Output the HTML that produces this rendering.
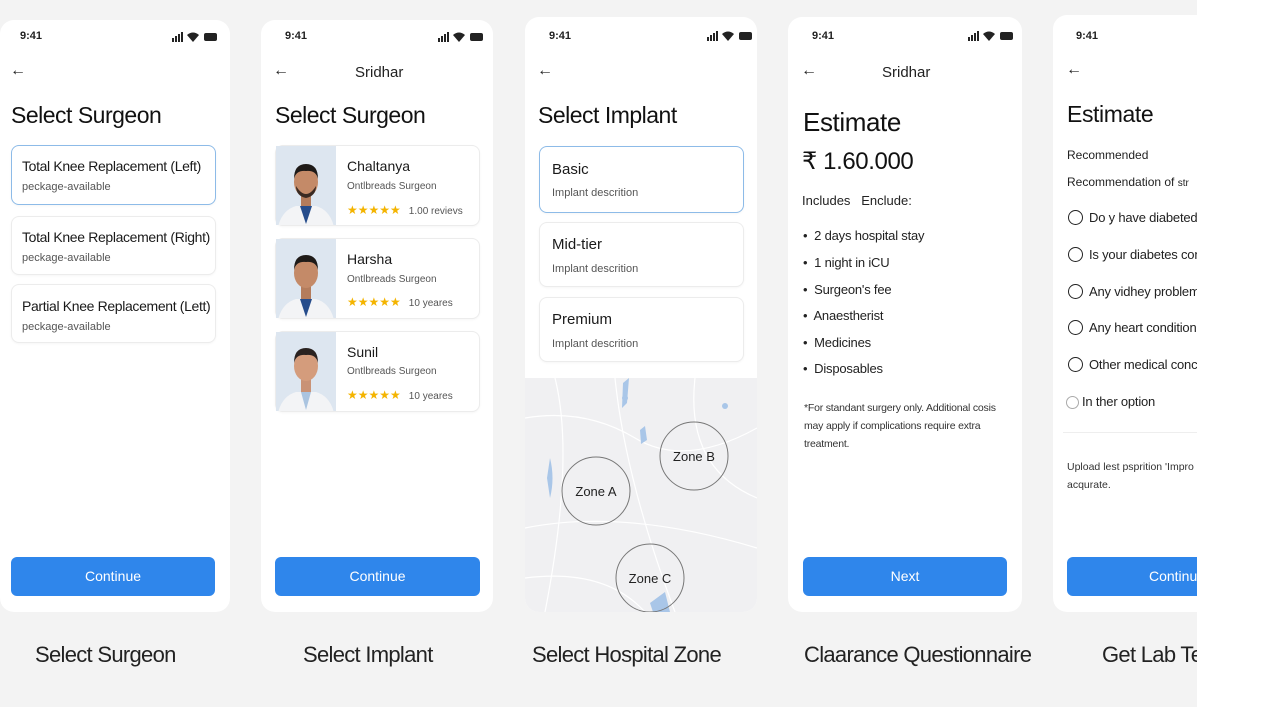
<!DOCTYPE html>
<html><head><meta charset="utf-8">
<style>
*{margin:0;padding:0;box-sizing:border-box}
body{width:1277px;height:707px;overflow:hidden;background:#f3f3f3;font-family:"Liberation Sans",sans-serif;color:#1a1a1a;position:relative}
.a{position:absolute}
.card{position:absolute;top:20px;height:592px;background:#fff;border-radius:14px;overflow:hidden}
.time{position:absolute;top:30px;font-size:11px;font-weight:bold;color:#222}
.sig{position:absolute;top:31px;width:46px;height:10px}
.back{position:absolute;top:64px;font-size:16px;color:#222}
.h1{position:absolute;font-size:23px;color:#111;letter-spacing:-0.5px}
.box{position:absolute;border:1px solid #ececec;border-radius:8px;background:#fff;box-shadow:0 1px 2px rgba(0,0,0,.04)}
.box.sel{border:1.5px solid #8dbbe8}
.t{font-size:14px;color:#1a1a1a;white-space:nowrap;letter-spacing:-0.35px}
.s{font-size:11px;color:#555;white-space:nowrap}
.btn{position:absolute;top:557px;height:39px;background:#2f86eb;border-radius:6px;color:#fff;font-size:14px;text-align:center;line-height:39px}
.lbl{position:absolute;top:642px;font-size:22px;color:#222;white-space:nowrap;letter-spacing:-0.7px}
.star{color:#f4b400;font-size:12px;letter-spacing:0px}
.ph{position:absolute;left:0;top:0;width:60px;height:100%;background:#dde6f0;overflow:hidden}
.bul{position:absolute;left:15px;font-size:13px;color:#222;letter-spacing:-0.2px}
.rad{position:absolute;left:15px;font-size:13px;color:#222;white-space:nowrap;letter-spacing:-0.2px}
.rad i{display:inline-block;width:15px;height:15px;border:1.5px solid #222;border-radius:50%;vertical-align:-3px;margin-right:6px}
</style></head><body>

<!-- Card 1 -->
<div class="card" style="left:0;width:230px">
  <div class="time" style="left:20px;top:10px">9:41</div>
  <svg class="sig" style="left:172px;top:12px" viewBox="0 0 46 10"><rect x="0" y="6" width="2" height="4" fill="#222"/><rect x="3" y="4" width="2" height="6" fill="#222"/><rect x="6" y="2" width="2" height="8" fill="#222"/><rect x="9" y="0" width="2" height="10" fill="#222"/><path d="M15 3 Q21 -2 27 3 L21 10Z" fill="#222"/><rect x="32" y="1" width="13" height="8" rx="2" fill="#222"/></svg>
  <div class="back" style="left:10px;top:42px">←</div>
  <div class="h1" style="left:11px;top:82px">Select Surgeon</div>
  <div class="box sel" style="left:11px;top:125px;width:205px;height:60px"><div class="t a" style="left:10px;top:12px">Total Knee Replacement (Left)</div><div class="s a" style="left:10px;top:35px">peckage-available</div></div>
  <div class="box" style="left:11px;top:196px;width:205px;height:59px"><div class="t a" style="left:10px;top:12px">Total Knee Replacement (Right)</div><div class="s a" style="left:10px;top:35px">peckage-available</div></div>
  <div class="box" style="left:11px;top:264px;width:205px;height:59px"><div class="t a" style="left:10px;top:13px">Partial Knee Replacement (Lett)</div><div class="s a" style="left:10px;top:36px">peckage-available</div></div>
  <div class="btn" style="left:11px;width:204px;top:537px">Continue</div>
</div>

<!-- Card 2 -->
<div class="card" style="left:261px;width:232px">
  <div class="time" style="left:24px;top:10px">9:41</div>
  <svg class="sig" style="left:177px;top:12px" viewBox="0 0 46 10"><rect x="0" y="6" width="2" height="4" fill="#222"/><rect x="3" y="4" width="2" height="6" fill="#222"/><rect x="6" y="2" width="2" height="8" fill="#222"/><rect x="9" y="0" width="2" height="10" fill="#222"/><path d="M15 3 Q21 -2 27 3 L21 10Z" fill="#222"/><rect x="32" y="1" width="13" height="8" rx="2" fill="#222"/></svg>
  <div class="back" style="left:12px;top:42px">←</div>
  <div class="a" style="left:94px;top:44px;font-size:15px;color:#222">Sridhar</div>
  <div class="h1" style="left:14px;top:82px">Select Surgeon</div>
  <div class="box" style="left:14px;top:125px;width:205px;height:81px"><div class="ph"><svg width="60" height="81" viewBox="0 0 60 81"><path d="M2 81 Q6 64 20 60 L40 60 Q54 64 58 81Z" fill="#f3f4f6"/><path d="M24 60 L30 78 L36 60Z" fill="#264d8c"/><rect x="25" y="46" width="10" height="14" fill="#b47c5c"/><ellipse cx="30" cy="36" rx="12" ry="15" fill="#c48a68"/><path d="M18 33 Q18 18 30 18 Q42 18 42 33 Q40 24 30 25 Q20 24 18 33Z" fill="#1e1a18"/><path d="M20 40 Q30 56 40 40 Q40 50 30 52 Q20 50 20 40Z" fill="#3a2a22"/></svg></div><div class="a" style="left:71px;top:12px;font-size:14px">Chaltanya</div><div class="s a" style="left:71px;top:35px;font-size:10px">Ontlbreads Surgeon</div><div class="a" style="left:71px;top:55px"><span class="star">★★★★★</span><span style="font-size:10px;color:#555;margin-left:8px">1.00 revievs</span></div></div>
  <div class="box" style="left:14px;top:218px;width:205px;height:81px"><div class="ph"><svg width="60" height="81" viewBox="0 0 60 81"><path d="M2 81 Q6 64 20 60 L40 60 Q54 64 58 81Z" fill="#f3f4f6"/><path d="M24 60 L30 78 L36 60Z" fill="#264d8c"/><rect x="25" y="46" width="10" height="14" fill="#b47c5c"/><ellipse cx="30" cy="34" rx="12" ry="15" fill="#c48a68"/><path d="M18 31 Q18 16 30 16 Q42 16 42 31 Q40 22 30 23 Q20 22 18 31Z" fill="#1e1a18"/></svg></div><div class="a" style="left:71px;top:12px;font-size:14px">Harsha</div><div class="s a" style="left:71px;top:35px;font-size:10px">Ontlbreads Surgeon</div><div class="a" style="left:71px;top:54px"><span class="star">★★★★★</span><span style="font-size:10px;color:#555;margin-left:8px">10 yeares</span></div></div>
  <div class="box" style="left:14px;top:311px;width:205px;height:81px"><div class="ph"><svg width="60" height="81" viewBox="0 0 60 81"><path d="M2 81 Q6 64 20 60 L40 60 Q54 64 58 81Z" fill="#f3f4f6"/><path d="M25 60 L30 78 L35 60Z" fill="#aac4e0"/><rect x="25" y="46" width="10" height="14" fill="#c99276"/><ellipse cx="30" cy="34" rx="12" ry="15" fill="#d49c7c"/><path d="M18 31 Q18 16 30 16 Q42 16 42 31 Q40 22 30 23 Q20 22 18 31Z" fill="#2a2220"/></svg></div><div class="a" style="left:71px;top:12px;font-size:14px">Sunil</div><div class="s a" style="left:71px;top:34px;font-size:10px">Ontlbreads Surgeon</div><div class="a" style="left:71px;top:54px"><span class="star">★★★★★</span><span style="font-size:10px;color:#555;margin-left:8px">10 yeares</span></div></div>
  <div class="btn" style="left:14px;width:205px;top:537px">Continue</div>
</div>

<!-- Card 3 -->
<div class="card" style="left:525px;width:232px;top:17px;height:595px">
  <div class="time" style="left:24px;top:13px">9:41</div>
  <svg class="sig" style="left:182px;top:14px" viewBox="0 0 46 10"><rect x="0" y="6" width="2" height="4" fill="#222"/><rect x="3" y="4" width="2" height="6" fill="#222"/><rect x="6" y="2" width="2" height="8" fill="#222"/><rect x="9" y="0" width="2" height="10" fill="#222"/><path d="M15 3 Q21 -2 27 3 L21 10Z" fill="#222"/><rect x="32" y="1" width="13" height="8" rx="2" fill="#222"/></svg>
  <div class="back" style="left:12px;top:45px">←</div>
  <div class="h1" style="left:13px;top:85px">Select Implant</div>
  <div class="box sel" style="left:14px;top:129px;width:205px;height:67px"><div class="a" style="left:12px;top:14px;font-size:15px">Basic</div><div class="s a" style="left:12px;top:40px">Implant descrition</div></div>
  <div class="box" style="left:14px;top:205px;width:205px;height:65px"><div class="a" style="left:12px;top:13px;font-size:15px">Mid-tier</div><div class="s a" style="left:12px;top:40px">Implant descrition</div></div>
  <div class="box" style="left:14px;top:280px;width:205px;height:65px"><div class="a" style="left:12px;top:13px;font-size:15px">Premium</div><div class="s a" style="left:12px;top:40px">Implant descrition</div></div>
  <svg class="a" style="left:0;top:361px" width="232" height="234" viewBox="0 0 232 234">
    <rect width="232" height="234" fill="#f0f0f2"/>
    <g stroke="#fff" stroke-width="1.2" fill="none"><path d="M0 40 Q60 30 110 60 T232 50"/><path d="M30 0 Q50 80 20 234"/><path d="M90 0 Q100 100 150 234"/><path d="M0 150 Q100 130 232 170"/><path d="M170 0 Q160 90 232 120"/><path d="M0 200 Q80 190 120 234"/></g>
    <g fill="#a9c6e8"><path d="M98 5 L104 0 L102 25 L97 30Z"/><path d="M115 52 L120 48 L122 62 L116 66Z"/><circle cx="100" cy="20" r="3"/><path d="M25 80 Q30 100 25 120 L22 100Z"/><circle cx="200" cy="28" r="3"/><path d="M125 225 L140 214 L145 234 L128 234Z"/></g>
    <g fill="none" stroke="#777" stroke-width="1"><circle cx="71" cy="113" r="34"/><circle cx="169" cy="78" r="34"/><circle cx="125" cy="200" r="34"/></g>
    <g font-family="Liberation Sans" font-size="13" fill="#222" text-anchor="middle"><text x="71" y="118">Zone A</text><text x="169" y="83">Zone B</text><text x="125" y="205">Zone C</text></g>
  </svg>
</div>

<!-- Card 4 -->
<div class="card" style="left:788px;width:234px;top:17px;height:595px">
  <div class="time" style="left:24px;top:13px">9:41</div>
  <svg class="sig" style="left:180px;top:14px" viewBox="0 0 46 10"><rect x="0" y="6" width="2" height="4" fill="#222"/><rect x="3" y="4" width="2" height="6" fill="#222"/><rect x="6" y="2" width="2" height="8" fill="#222"/><rect x="9" y="0" width="2" height="10" fill="#222"/><path d="M15 3 Q21 -2 27 3 L21 10Z" fill="#222"/><rect x="32" y="1" width="13" height="8" rx="2" fill="#222"/></svg>
  <div class="back" style="left:13px;top:45px">←</div>
  <div class="a" style="left:94px;top:47px;font-size:15px;color:#222">Sridhar</div>
  <div class="a" style="left:15px;top:90px;font-size:26px;color:#111;letter-spacing:-0.4px">Estimate</div>
  <div class="a" style="left:14px;top:130px;font-size:24px;color:#111;letter-spacing:-0.4px">₹ 1.60.000</div>
  <div class="a" style="left:14px;top:176px;font-size:13px;color:#222">Includes&nbsp;&nbsp;&nbsp;Enclude:</div>
  <div class="bul" style="top:211px">•&nbsp; 2 days hospital stay</div>
  <div class="bul" style="top:238px">•&nbsp; 1 night in iCU</div>
  <div class="bul" style="top:265px">•&nbsp; Surgeon's fee</div>
  <div class="bul" style="top:291px">•&nbsp; Anaestherist</div>
  <div class="bul" style="top:318px">•&nbsp; Medicines</div>
  <div class="bul" style="top:344px">•&nbsp; Disposables</div>
  <div class="a" style="left:16px;top:382px;width:210px;font-size:10.5px;line-height:18px;color:#333;letter-spacing:-0.2px">*For standant surgery only. Additional cosis may apply if complications require extra treatment.</div>
  <div class="btn" style="left:15px;width:204px;top:540px">Next</div>
</div>

<!-- Card 5 -->
<div class="card" style="left:1053px;width:160px;top:15px;height:597px;border-radius:14px 0 0 14px">
  <div class="time" style="left:23px;top:15px">9:41</div>
  <div class="back" style="left:13px;top:46px">←</div>
  <div class="a" style="left:14px;top:86px;font-size:23px;color:#111;letter-spacing:-0.4px">Estimate</div>
  <div class="a" style="left:14px;top:133px;font-size:12px;color:#222">Recommended</div>
  <div class="a" style="left:14px;top:160px;font-size:12px;color:#222;white-space:nowrap">Recommendation of <span style="font-size:10px">str</span></div>
  <div class="rad" style="top:195px"><i></i>Do y have diabeted</div>
  <div class="rad" style="top:232px"><i></i>Is your diabetes con</div>
  <div class="rad" style="top:269px"><i></i>Any vidhey problem</div>
  <div class="rad" style="top:305px"><i></i>Any heart condition</div>
  <div class="rad" style="top:342px"><i></i>Other medical conc</div>
  <div class="rad" style="top:379px;left:13px"><i style="border:1px solid #aaa;width:13px;height:13px;margin-right:3px"></i>In ther option</div>
  <div class="a" style="left:10px;top:417px;width:150px;height:1px;background:#eee"></div>
  <div class="a" style="left:14px;top:443px;font-size:10.5px;line-height:18px;color:#333;white-space:nowrap">Upload lest psprition 'Impro<br>acqurate.</div>
  <div class="btn" style="left:14px;width:200px;top:542px;padding-left:20px">Continue</div>
</div>
<div class="a" style="left:1197px;top:0;width:80px;height:707px;background:#fff"></div>

<div class="lbl" style="left:35px">Select Surgeon</div>
<div class="lbl" style="left:303px">Select Implant</div>
<div class="lbl" style="left:532px">Select Hospital Zone</div>
<div class="lbl" style="left:804px">Claarance Questionnaire</div>
<div class="lbl" style="left:1102px;width:95px;overflow:hidden">Get Lab Tests</div>
</body></html>
